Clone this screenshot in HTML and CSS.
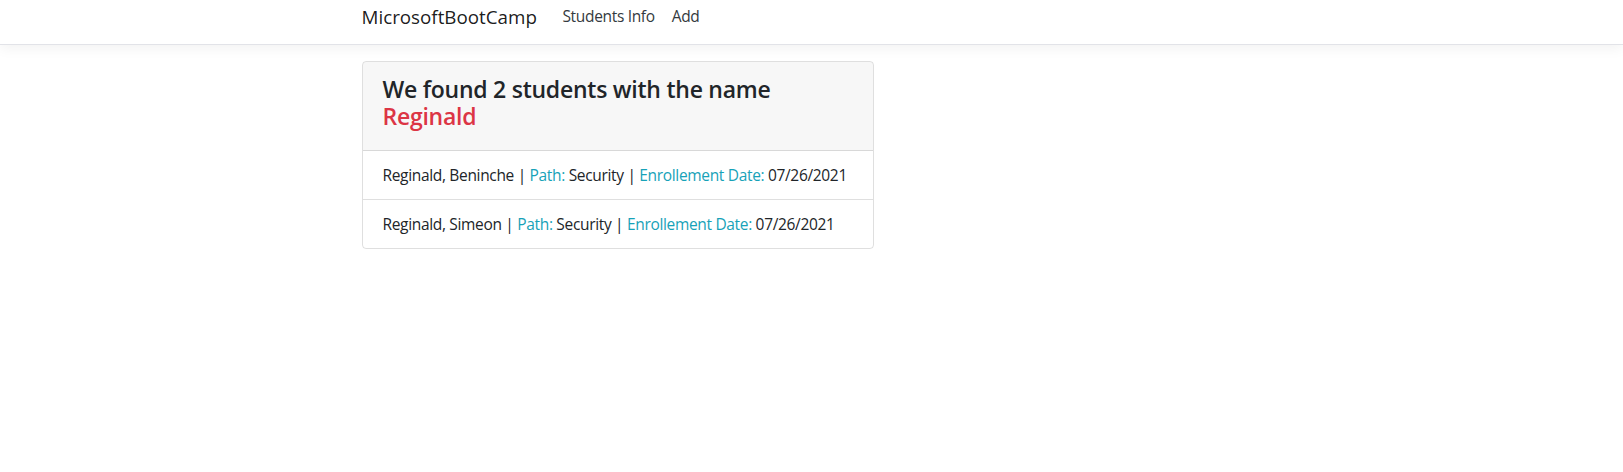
FILE: index.html
```html
<!DOCTYPE html>
<html lang="en">
<head>
<meta charset="utf-8">
<title>Students</title>
<link rel="stylesheet" href="styles.css">
</head>
<body>
<header class="navbar">
  <div class="container nav-inner">
    <a class="brand" href="#">MicrosoftBootCamp</a>
    <nav class="nav-links">
      <a class="nav-link" href="#">Students Info</a>
      <a class="nav-link" href="#">Add</a>
    </nav>
  </div>
</header>
<main class="container">
  <div class="card">
    <div class="card-header">
      <h4 class="title">We found 2 students with the name <span class="danger">Reginald</span></h4>
    </div>
    <ul class="list">
      <li class="item">Reginald, Beninche | <span class="info">Path:</span> Security | <span class="info">Enrollement Date:</span> 07/26/2021</li>
      <li class="item">Reginald, Simeon | <span class="info">Path:</span> Security | <span class="info">Enrollement Date:</span> 07/26/2021</li>
    </ul>
  </div>
</main>
</body>
</html>
```
FILE: styles.css
```css
* { box-sizing: border-box; }
html { font-size: 16px; }
body {
  margin: 0;
  font-family: "Open Sans", "Noto Sans", sans-serif;
  font-size: 15.5px;
  letter-spacing: -0.33px;
  line-height: 24px;
  color: #212529;
  background: #fff;
}
.container {
  width: 930px;
  margin: 0 auto;
  padding: 0 15px;
}
.navbar {
  height: 45px;
  border-bottom: 1px solid #e2e3e8;
  box-shadow: 0 4px 12px rgba(0,0,0,.05);
  margin-bottom: 16px;
}
.nav-inner {
  display: flex;
  align-items: flex-start;
  height: 44px;
}
.brand {
  font-size: 18.8px;
  letter-spacing: 0;
  line-height: 28px;
  padding-top: 3px;
  color: rgba(0,0,0,.9);
  text-decoration: none;
  margin-right: 17px;
}
.nav-links { display: flex; padding-top: 4px; }
.nav-link {
  color: #343a40;
  text-decoration: none;
  padding: 0 8.5px;
}
.card {
  width: 512px;
  border: 1px solid rgba(0,0,0,.125);
  border-radius: 4px;
  overflow: hidden;
}
.card-header {
  background: rgba(0,0,0,.03);
  padding: 13.5px 20px 11.5px;
  border-bottom: 1px solid rgba(0,0,0,.125);
}
.title {
  margin: 0 0 8px;
  font-size: 23px;
  letter-spacing: -0.25px;
  font-weight: 600;
  line-height: 27.4px;
}
.danger { color: #dc3545; }
.info { color: #17a2b8; }
.list { list-style: none; margin: 0; padding: 0; }
.item {
  padding: 12px 20px;
}
.item + .item { border-top: 1px solid rgba(0,0,0,.125); }
```
